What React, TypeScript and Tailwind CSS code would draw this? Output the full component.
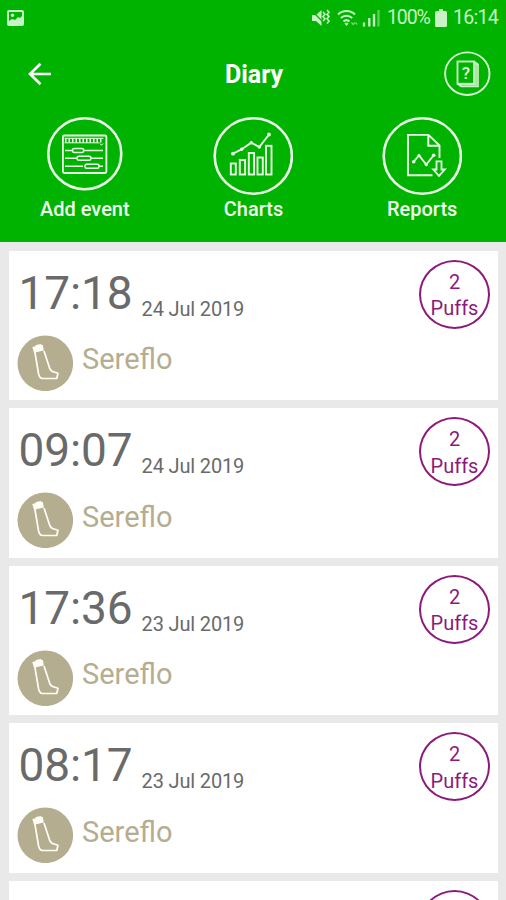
import type { ReactNode } from 'react';

const ENTRIES = [
  { time: '17:18', date: '24 Jul 2019', name: 'Sereflo', puffs: 2 },
  { time: '09:07', date: '24 Jul 2019', name: 'Sereflo', puffs: 2 },
  { time: '17:36', date: '23 Jul 2019', name: 'Sereflo', puffs: 2 },
  { time: '08:17', date: '23 Jul 2019', name: 'Sereflo', puffs: 2 },
];

const StatusBar = () => (
  <div className="flex h-9 items-center pl-[7px] pr-[8px] text-[#c9f3c4]">
    <svg width="17" height="17" viewBox="0 0 17 17">
      <path fillRule="evenodd" fill="currentColor" d="M2 0h13a2 2 0 0 1 2 2v12a2 2 0 0 1-2 2H2a2 2 0 0 1-2-2V2a2 2 0 0 1 2-2zM2 2v9l3-2 3 1 3-3 2 1 2-2V2z" />
      <circle cx="5.5" cy="5.3" r="1.7" fill="currentColor" />
    </svg>
    <svg className="ml-auto" width="72" height="22" viewBox="0 0 72 22" fill="none" stroke="currentColor">
      <path d="M2 8h4l5.500-5v16L6 14H2z" fill="currentColor" stroke="none" />
      <path d="M1.500 3.500l15 15" stroke="#00b300" strokeWidth="1.200" />
      <path d="M13 5l2 2.200-2 2.300 2 2.300-2 2.200M17 3l2 2.200-2 2.200 2 2.200-2 2.200 2 2.200-2 2.500" strokeWidth="1.600" />
      <path d="M28 7.500a12.300 12.300 0 0 1 17 0M30.800 11a8.200 8.200 0 0 1 11.400 0M33.500 14.500a4.500 4.500 0 0 1 6 0" strokeWidth="2" />
      <path d="M35 16.300h3l-1.500 2.200z" fill="currentColor" />
      <path d="M41.500 15.500l1.700 2 1.700-2M45.500 15.500l1.700 2" strokeWidth="1.200" opacity=".6" />
      <path d="M54 15.500v4M59.300 11v8.500M64 7v12.500" strokeWidth="2.300" />
      <path d="M68.500 3v16.500" strokeWidth="2.300" opacity=".45" />
    </svg>
    <span className="ml-[5px] w-[44px] whitespace-nowrap text-[19.5px] tracking-[-1.1px]">100%</span>
    <svg className="ml-[4px]" width="12" height="18" viewBox="0 0 12 18">
      <path fill="currentColor" d="M4 0h4v2h2.500a1.500 1.500 0 0 1 1.500 1.500v13a1.500 1.500 0 0 1-1.500 1.500h-9A1.500 1.500 0 0 1 0 16.500v-13A1.500 1.500 0 0 1 1.500 2H4z" />
    </svg>
    <span className="ml-[6px] w-[45px] whitespace-nowrap text-[19.5px] tracking-[-0.7px]">16:14</span>
  </div>
);

const BackIcon = () => (
  <svg width="24" height="24" viewBox="0 0 24 24" fill="none" stroke="white" strokeWidth="2.700">
    <path d="M24 12H3M13.500 1.800L3 12l10.500 10.200" />
  </svg>
);

const HelpIcon = () => (
  <svg width="48" height="46" viewBox="0 0 48 46" fill="none" stroke="#c9f3c4">
    <ellipse cx="24.300" cy="22.700" rx="22.200" ry="21.300" strokeWidth="1.900" stroke="#d9f8d4" />
    <rect x="14.500" y="10.500" width="16.500" height="22.300" strokeWidth="1.900" />
    <path d="M31 10.500l4 3v21.800H18l-3.500-2.500M33 12.500v21H16.500" strokeWidth="1.700" />
    <text x="22.900" y="28" textAnchor="middle" fontSize="17" fontWeight="500" fill="#e6fbe2" stroke="none">?</text>
  </svg>
);

const AddEventIcon = () => (
  <svg width="80" height="82" viewBox="0 0 80 82" fill="none" stroke="#eafde6">
    <ellipse cx="40.800" cy="38.700" rx="36.500" ry="35.500" strokeWidth="2.600" />
    <rect x="18.900" y="20.500" width="43.500" height="37.500" rx="1.500" strokeWidth="1.800" />
    <path d="M20.500 23.300h39M20.500 27.800h35" strokeWidth="1" />
    <path d="M21 25.500h38" strokeWidth="4" strokeDasharray="1.500 2" />
    <path d="M56 28.500l1.500 1.800 1.500-1.800" strokeWidth="1" />
    <path d="M21 35.500h7.500M40 35.500h19M21 43.300h12M47 43.300h12M21 51.300h18M55 51.300h4" strokeWidth="1.500" />
    <rect x="28.600" y="33.500" width="11" height="4" rx="1.500" strokeWidth="1.500" />
    <rect x="33" y="41.300" width="14" height="4" rx="2" strokeWidth="1.500" />
    <rect x="41" y="49.300" width="14" height="4" rx="1.500" strokeWidth="1.500" />
  </svg>
);

const ChartsIcon = () => (
  <svg width="80" height="82" viewBox="0 0 80 82" fill="none" stroke="#eafde6">
    <ellipse cx="40.300" cy="41" rx="38.600" ry="37.700" strokeWidth="2.600" />
    <g strokeWidth="1.900">
      <rect x="17.800" y="48.500" width="5" height="11" />
      <rect x="26.800" y="45" width="5.300" height="14.500" />
      <rect x="35.800" y="38" width="5.300" height="21.500" />
      <rect x="44.500" y="42.500" width="5.300" height="17" />
      <rect x="53" y="30.800" width="5.500" height="28.700" />
      <path d="M20 38.700l8.700-4.400 9.600-6.600 8 4.300L56 19.500" />
    </g>
    <g fill="#eafde6" stroke="none">
      <circle cx="20" cy="38.700" r="1.900" />
      <circle cx="28.700" cy="34.300" r="1.700" />
      <circle cx="38.300" cy="27.700" r="1.700" />
      <circle cx="46.300" cy="32" r="1.700" />
      <circle cx="56" cy="19.500" r="1.900" />
    </g>
  </svg>
);

const ReportsIcon = () => (
  <svg width="80" height="82" viewBox="0 0 80 82" fill="none" stroke="#eafde6">
    <ellipse cx="40.300" cy="41" rx="38.600" ry="37.700" strokeWidth="2.600" />
    <path d="M57.500 43V30.500L46.500 19.900H26v40.400h24.500M46.300 20v10.700h11" strokeWidth="1.900" />
    <path d="M31.700 46.700l5.300-6.200 7.300 9 7.400-9.200" strokeWidth="1.800" />
    <g fill="#eafde6" stroke="none">
      <circle cx="31.700" cy="46.700" r="1.800" />
      <circle cx="37" cy="40.500" r="1.500" />
      <circle cx="44.300" cy="49.500" r="1.700" />
      <circle cx="51.700" cy="40.300" r="1.800" />
    </g>
    <path d="M54.500 46.300h5v8.200h3.300L57 60.800l-5.800-6.300h3.300z" strokeWidth="1.800" />
  </svg>
);

const InhalerIcon = () => (
  <svg width="56" height="56" viewBox="0 0 56 56">
    <circle cx="28.300" cy="28.300" r="27.800" fill="#b5ad90" />
    <path d="M15.300 12l3-.8.700-1.300 4.800-.9.800 1 1.300.1.900 5.400-9.800 2.300z" fill="#fffef5" />
    <path d="M17.800 16.500L21.500 38.500Q22.500 43.500 25.500 43.500L39.800 43.300L41 38.300L37 37Q33.600 36.300 32.600 33L27 16" fill="none" stroke="#fffef5" strokeWidth="1.700" strokeLinejoin="round" />
  </svg>
);

const Action = ({ icon, label }: { icon: ReactNode; label: string }) => (
  <div className="flex flex-1 flex-col items-center">
    {icon}
    <span className="pl-px text-[20px] font-medium leading-6 text-[#f1fdee]">{label}</span>
  </div>
);

const PuffBadge = ({ children }: { children?: ReactNode }) => (
  <div className="flex h-[69px] w-[71px] flex-col items-center rounded-[50%] border-[2.5px] border-[#8c1a7a] pt-[7px] text-[20px] leading-[26.5px] text-[#8c1a7a]">
    {children}
  </div>
);

const App = () => {
  return (
    <div className="h-[900px] w-full overflow-hidden bg-[#e9e9e9] font-['Roboto',sans-serif]">
      <header className="h-[242px] bg-[#00b300]">
        <StatusBar />
        <div className="flex h-[76px] items-center pl-[27px] pr-[15px]">
          <div className="flex w-12">
            <BackIcon />
          </div>
          <h1 className="flex-1 pr-[10px] pt-px text-center text-[25px] font-bold leading-7 text-white">Diary</h1>
          <HelpIcon />
        </div>
        <div className="flex pt-[3px]">
          <Action icon={<AddEventIcon />} label="Add event" />
          <Action icon={<ChartsIcon />} label="Charts" />
          <Action icon={<ReportsIcon />} label="Reports" />
        </div>
      </header>

      <main className="flex flex-col gap-2 pl-[9px] pr-2 pt-[8.5px]">
        {ENTRIES.map((entry) => (
          <article key={`${entry.date} ${entry.time}`} className="flex h-[149.5px] shrink-0 justify-between bg-white pl-2 pr-[8px] pt-[9px]">
            <div>
              <div className="flex items-baseline gap-[9px] pl-[1.5px] text-[#6a6a6a]">
                <span className="text-[46px] leading-[66px] tracking-[-0.1px]">{entry.time}</span>
                <span className="relative top-[7px] text-[20px] tracking-[-0.15px]">{entry.date}</span>
              </div>
              <div className="mt-[9px] flex gap-[9px]">
                <InhalerIcon />
                <span className="pt-[6.5px] text-[29px] leading-9 text-[#b5ad90]">{entry.name}</span>
              </div>
            </div>
            <PuffBadge>
              <span>{entry.puffs}</span>
              <span>Puffs</span>
            </PuffBadge>
          </article>
        ))}
        {/* next entry, scrolled mostly out of view */}
        <article className="flex h-[149.5px] shrink-0 justify-end bg-white pr-[8px] pt-[9px]">
          <PuffBadge />
        </article>
      </main>
    </div>
  );
};

export default App;
